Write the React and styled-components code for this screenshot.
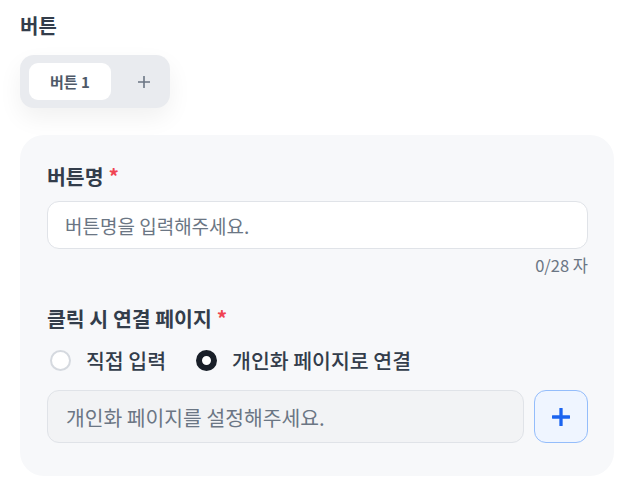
import React from 'react';
import styled, { createGlobalStyle } from 'styled-components';

const Colors = {
  title: '#333d4b',
  text: '#4e5968',
  midText: '#6b7684',
  outline: '#e0e3e8',
  card: '#f7f8fa',
  tabBar: '#e9ebef',
  alert: '#f04452',
  blue: '#1b64f0',
  dark: '#191f28',
};

const GlobalStyle = createGlobalStyle`
  * { box-sizing: border-box; }
  body {
    margin: 0;
    background: #fff;
    font-family: "Noto Sans CJK KR", "Noto Sans", sans-serif;
    color: ${Colors.title};
  }
`;

const Page = styled.div`
  padding: 12px 20px 20px 20px;
  display: flex;
  flex-direction: column;
`;

const SectionTitle = styled.h2`
  margin: 0;
  font-size: 20px;
  font-weight: 700;
  line-height: 28px;
  color: ${Colors.title};
`;

const TabBar = styled.div`
  margin-top: 15px;
  align-self: flex-start;
  display: flex;
  align-items: center;
  gap: 12px;
  width: 150px;
  height: 53px;
  padding: 8px 6px 8px 9px;
  border-radius: 14px;
  background: ${Colors.tabBar};
  box-shadow: 0 10px 24px rgba(0, 0, 0, 0.06);
`;

const Tab = styled.button`
  width: 82px;
  height: 37px;
  border: none;
  border-radius: 9px;
  background: ${p => (p.active ? '#fff' : 'transparent')};
  font-family: inherit;
  font-size: 15px;
  font-weight: 700;
  color: ${Colors.text};
  padding: 0;
`;

const AddTab = styled.button`
  flex: 1;
  height: 37px;
  border: none;
  background: transparent;
  display: flex;
  align-items: center;
  justify-content: center;
  padding: 0;
  color: ${Colors.midText};
`;

const Card = styled.section`
  margin-top: 27px;
  width: 594px;
  border-radius: 24px;
  background: ${Colors.card};
  padding: 27px 26px 33px 27px;
  display: flex;
  flex-direction: column;
`;

const Label = styled.div`
  font-size: 20.5px;
  font-weight: 700;
  line-height: 28px;
  color: ${Colors.title};
  margin-top: ${p => p.offset || 0}px;
`;

const Required = styled.span`
  color: ${Colors.alert};
  margin-left: 5px;
`;

const TextInput = styled.input`
  margin-top: 11px;
  height: 48px;
  width: 100%;
  border: 1px solid ${Colors.outline};
  border-radius: 12px;
  background: #fff;
  padding: 0 17px;
  font-family: inherit;
  font-size: 19px;
  color: ${Colors.title};
  outline: none;
  &::placeholder { color: ${Colors.midText}; }
`;

const Counter = styled.div`
  margin-top: 6px;
  align-self: flex-end;
  font-size: 16.5px;
  line-height: 20px;
  color: ${Colors.midText};
`;

const RadioGroup = styled.div`
  margin-top: 14px;
  display: flex;
  align-items: center;
  gap: 30px;
  padding-left: 3px;
`;

const RadioOption = styled.label`
  display: flex;
  align-items: center;
  gap: 15px;
  font-size: 20.5px;
  font-weight: 500;
  line-height: 28px;
  color: ${Colors.title};
`;

const RadioDot = styled.span`
  width: 21px;
  height: 21px;
  border-radius: 50%;
  border: ${p => (p.checked ? `6px solid ${Colors.dark}` : '2px solid #d5d9df')};
  background: #fff;
`;

const PickerRow = styled.div`
  margin-top: 16px;
  display: flex;
  gap: 10px;
`;

const PickerField = styled.div`
  flex: 1;
  height: 53px;
  border: 1px solid ${Colors.outline};
  border-radius: 12px;
  background: #f2f3f5;
  display: flex;
  align-items: center;
  padding: 0 18px;
  font-size: 20.4px;
  color: ${Colors.midText};
`;

const PickerButton = styled.button`
  width: 54px;
  height: 53px;
  border: 1px solid #94bdfb;
  border-radius: 12px;
  background: #eff5ff;
  display: flex;
  align-items: center;
  justify-content: center;
  padding: 0;
  color: ${Colors.blue};
`;

const Plus = ({ size, stroke }) => (
  <svg width={size} height={size} viewBox="0 0 12 12" fill="none">
    <path d="M6 0.5V11.5M0.5 6H11.5" stroke="currentColor" strokeWidth={stroke} strokeLinecap="round" />
  </svg>
);

export default function App() {
  return (
    <Page>
      <GlobalStyle />
      <SectionTitle>버튼</SectionTitle>
      <TabBar>
        <Tab active>버튼 1</Tab>
        <AddTab>
          <Plus size={12} stroke={1.6} />
        </AddTab>
      </TabBar>
      <Card>
        <Label>
          버튼명<Required>*</Required>
        </Label>
        <TextInput placeholder="버튼명을 입력해주세요." />
        <Counter>0/28 자</Counter>
        <Label offset={29}>
          클릭 시 연결 페이지<Required>*</Required>
        </Label>
        <RadioGroup>
          <RadioOption>
            <RadioDot />
            직접 입력
          </RadioOption>
          <RadioOption>
            <RadioDot checked />
            개인화 페이지로 연결
          </RadioOption>
        </RadioGroup>
        <PickerRow>
          <PickerField>개인화 페이지를 설정해주세요.</PickerField>
          <PickerButton>
            <Plus size={18} stroke={2.2} />
          </PickerButton>
        </PickerRow>
      </Card>
    </Page>
  );
}
